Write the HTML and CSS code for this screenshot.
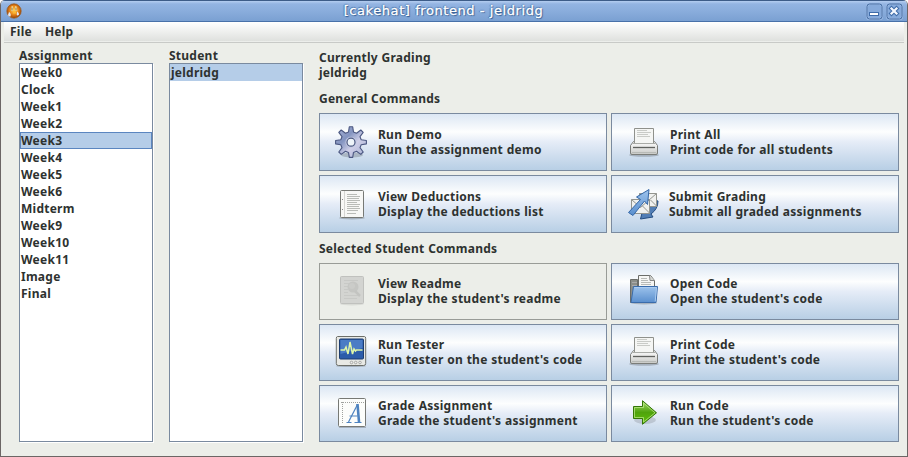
FILE: index.html
```html
<!DOCTYPE html>
<html lang="en">
<head>
<meta charset="utf-8">
<title>[cakehat] frontend - jeldridg</title>
<link rel="stylesheet" href="styles.css">
</head>
<body>
<svg width="0" height="0" class="defs" aria-hidden="true">
  <defs>
    <linearGradient id="metal" x2="0" y2="1"><stop offset="0" stop-color="#fff"/><stop offset="1" stop-color="#c8c9c6"/></linearGradient>
    <linearGradient id="gearfill" x2="1" y2="1"><stop offset="0" stop-color="#a9b3d6"/><stop offset=".35" stop-color="#8494c0"/><stop offset=".6" stop-color="#cfcfe8"/><stop offset="1" stop-color="#a3aed1"/></linearGradient>
    <linearGradient id="blue" x2="0" y2="1"><stop offset="0" stop-color="#9dc3ec"/><stop offset="1" stop-color="#5a8fce"/></linearGradient>
    <linearGradient id="green" x2="0" y2="1"><stop offset="0" stop-color="#a4d96c"/><stop offset=".5" stop-color="#4fa30c"/><stop offset="1" stop-color="#62c20a"/></linearGradient>
    <radialGradient id="orange" cx=".5" cy=".45"><stop offset="0" stop-color="#ffd35a"/><stop offset=".6" stop-color="#e8871a"/><stop offset="1" stop-color="#a84d08"/></radialGradient>
    <symbol id="printer" viewBox="0 0 32 32">
      <ellipse cx="16" cy="29" rx="15" ry="1.800" fill="#000" opacity=".2"/>
      <path d="M5.500 15.500h21l3 4v7.500q0 1.500-1.500 1.500h-24q-1.500 0-1.500-1.500v-7.500z" fill="url(#metal)" stroke="#7b7d79"/>
      <path d="M6.500 2.500h19v15h-19z" fill="#f5f6f4" stroke="#8f918c"/>
      <path d="M9 4.500h10M9 6.500h14M9 8.500h11M9 10.500h13" stroke="#c9cbc7"/>
      <path d="M5 17.500h22" stroke="#a9aba7"/>
      <path d="M5 21.500h22" stroke="#60625f" stroke-width="1.300"/>
      <path d="M4 26.500h24" stroke="#b8bab6"/>
    </symbol>
  </defs>
</svg>
<div class="window">
  <header class="titlebar">
    <svg class="app-icon" width="16" height="16" viewBox="0 0 16 16">
      <circle cx="8" cy="8" r="7.200" fill="url(#orange)" stroke="#9a5a1c" stroke-width=".7"/>
      <path d="M5.500 3.500q1-.8 1.500.2v4H5zM9 3.700q.8-1 1.700 0l.6 4H9z" fill="#fff0b0"/>
      <path d="M6 4.500v3M10 4.500v3" stroke="#8a642e"/>
      <path d="M3 9q2.500 1.500 1.500 4.500Q2.500 14 2 12zM11.200 8.500q2.500 2 1.500 3.500-1.500 1-2-.6z" fill="#e3eaf4"/>
      <path d="M7 9.500h3" stroke="#f9b936" stroke-width="2"/>
    </svg>
    <h1 class="title">[cakehat] frontend - jeldridg</h1>
    <div class="controls">
      <svg width="17" height="17" viewBox="0 0 17 17"><rect x="1" y="1" width="15" height="15" rx="2.500" fill="#86aadb" stroke="#a5c2ea" stroke-width="2"/><rect x="1" y="1" width="15" height="15" rx="2.500" fill="none" stroke="#3c659c"/><rect x="3.500" y="9.500" width="9" height="3" fill="#fff" stroke="#3f6ca9"/></svg>
      <svg width="17" height="17" viewBox="0 0 17 17"><rect x="1" y="1" width="15" height="15" rx="2.500" fill="#86aadb" stroke="#a5c2ea" stroke-width="2"/><rect x="1" y="1" width="15" height="15" rx="2.500" fill="none" stroke="#3c659c"/><path d="M5.500 5.500l5 5M10.500 5.500l-5 5" stroke="#3f6ca9" stroke-width="4.200" stroke-linecap="square"/><path d="M5.500 5.500l5 5M10.500 5.500l-5 5" stroke="#f4f8fe" stroke-width="2.200" stroke-linecap="square"/></svg>
    </div>
  </header>
  <nav class="menubar"><span>File</span><span>Help</span></nav>
  <main class="content">
    <section class="column">
      <h2>Assignment</h2>
      <ul class="list">
        <li>Week0</li><li>Clock</li><li>Week1</li><li>Week2</li><li class="selected focused">Week3</li><li>Week4</li><li>Week5</li><li>Week6</li><li>Midterm</li><li>Week9</li><li>Week10</li><li>Week11</li><li>Image</li><li>Final</li>
      </ul>
    </section>
    <section class="column">
      <h2>Student</h2>
      <ul class="list"><li class="selected">jeldridg</li></ul>
    </section>
    <section class="commands">
      <p class="current">Currently Grading<br>jeldridg</p>
      <h2 class="general-title">General Commands</h2>
      <div class="grid general">
        <button>
          <svg viewBox="0 0 32 32"><ellipse cx="17" cy="29" rx="11" ry="2.500" fill="#000" opacity=".18"/><path d="M14.300 .8h3.400l.8 5.200 3 1.200 4.300-3.200 2.400 2.400-3.200 4.300 1.200 3 5.200.8v3.400l-5.200.8-1.200 3 3.200 4.300-2.400 2.400-4.300-3.200-3 1.200-.8 5h-3.400l-.8-5-3-1.200-4.300 3.200-2.400-2.400 3.200-4.300-1.200-3-5.200-.8v-3.400l5.200-.8 1.200-3-3.200-4.300 2.400-2.400 4.300 3.200 3-1.200z" fill="url(#gearfill)" stroke="#4b5781" stroke-width="1.100" stroke-linejoin="round"/><circle cx="16" cy="16.200" r="5.500" fill="#c3cae2"/><circle cx="16" cy="16.200" r="4" fill="#eef4f9" stroke="#4b5781" stroke-width="1.200"/></svg>
          <span>Run Demo<br>Run the assignment demo</span>
        </button>
        <button>
          <svg><use href="#printer"/></svg>
          <span>Print All<br>Print code for all students</span>
        </button>
        <button>
          <svg viewBox="0 0 32 32"><ellipse cx="17" cy="30" rx="13" ry="1.500" fill="#000" opacity=".2"/><rect x="5.500" y="2.500" width="23" height="27" rx="1" fill="#f7f7f5" stroke="#777975"/><path d="M9.500 3v26" stroke="#d5d5d2"/><path d="M12 6.500h10M12 8.500h13M12 10.500h12M12 12.500h13M12 14.500h10M12 16.500h13M12 18.500h12M12 20.500h13M12 22.500h11M12 25.500h9" stroke="#b9bbb7"/><path d="M7 11.500h1M7 21.500h1" stroke="#888"/></svg>
          <span>View Deductions<br>Display the deductions list</span>
        </button>
        <button class="submit">
          <svg viewBox="0 0 32 32"><path d="M13.500 31l2.500-10 3 2q7-5 8-11l4 1q0 8-7 13l2 3z" fill="#527eb5" stroke="#244d81"/><g fill="#f0f1ef" stroke="#93958f"><path d="M12.500 5.500h17v13h-17z"/><path d="M12.500 5.500l9 7 8-7M29.500 18l-6-6" fill="none"/><path d="M4.500 11.500h18v14h-18z"/><path d="M4.500 25l7-7M22.500 25l-7-7M4.500 11.500l9 8 9-8" fill="none"/></g><path d="M1.500 24.500l12-13-4-2.500L22 1.500l-1.500 15-3-3.500L6 27.500z" fill="url(#blue)" stroke="#3467a7"/></svg>
          <span>Submit Grading<br>Submit all graded assignments</span>
        </button>
      </div>
      <h2 class="student-title">Selected Student Commands</h2>
      <div class="grid student">
        <button disabled>
          <svg viewBox="0 0 32 32"><ellipse cx="17" cy="30" rx="12" ry="1.500" fill="#000" opacity=".08"/><rect x="5.500" y="2.500" width="23" height="27" rx="1" fill="#d3d4d1" stroke="#c0c1be"/><path d="M9 6.500h14M9 9.500h5M9 12.500h4M9 15.500h4M9 18.500h4M9 21.500h15M9 24.500h13" stroke="#c8c9c6"/><circle cx="18" cy="13" r="5.500" fill="#c5c6c3"/><circle cx="17" cy="12" r="3" fill="#cbccc9"/><path d="M20 17l5 5" stroke="#c3c4c1" stroke-width="2.500"/></svg>
          <span>View Readme<br>Display the student's readme</span>
        </button>
        <button>
          <svg viewBox="0 0 32 32"><ellipse cx="16" cy="31" rx="15" ry="1" fill="#000" opacity=".2"/><path d="M2.500 1.500h27q1.200 0 1.200 2v25q0 2-2 2H3.300q-2 0-2-2v-25q0-2 1.200-2z" fill="#e8e9e5" stroke="#6c6e69"/><rect x="4.500" y="4" width="24" height="20" rx="1" fill="#2c5caa" stroke="#1d3d70"/><path d="M5.500 5h22v8l-22 6z" fill="#4b7cc5"/><path d="M5.500 15h4l1.500-3 2 7 2-12 2.500 12 1.500-5 1.500 2 1-1h6" fill="none" stroke="#e0f6a8" stroke-width="1.500"/><g fill="#eee" stroke="#9a9c98" stroke-width=".8"><circle cx="16.500" cy="27.500" r="1.300"/><circle cx="20.700" cy="27.500" r="1.300"/><circle cx="25" cy="27.500" r="1.300"/></g></svg>
          <span>Run Tester<br>Run tester on the student's code</span>
        </button>
        <button>
          <svg viewBox="0 0 32 32"><rect x="3.500" y="2.500" width="27" height="28" rx="1" fill="#fcfdfb" stroke="#777975"/><path d="M6 6.500h23M7.500 6v22" stroke="#a0a29e" stroke-dasharray="1 1"/><path d="M4 31.500h27" stroke="#0003"/><g stroke="#4e83c0" fill="none"><path d="M11.500 26.500h5M19.500 26.500h7M14.500 20h8" stroke-width="1.200"/><path d="M13.500 26L22.500 8.500" stroke-width="1.200"/><path d="M22.500 8L24 26" stroke-width="2.600"/></g></svg>
          <span>Grade Assignment<br>Grade the student's assignment</span>
        </button>
        <button>
          <svg viewBox="0 0 32 32"><ellipse cx="16" cy="29" rx="13" ry="1.500" fill="#000" opacity=".2"/><path d="M2.500 5.500h7v23h-7z" fill="#8b8e89" stroke="#6b6d69"/><path d="M4 8.500h5M4 11.500h5" stroke="#aaa"/><path d="M10.500 1.500h12l4 5v15h-16z" fill="#f6f6f4" stroke="#6b6d69"/><path d="M21.500 1.500l.5 5h4.500" fill="#d5d7d3" stroke="#888"/><path d="M13 4.500h6M13 6.500h7M13 8.500h10M13 10.500h10" stroke="#b9bbb7"/><path d="M5.500 12.500h24l-1.500 16h-25z" fill="url(#blue)" stroke="#3a6cab"/><path d="M6.500 13.500h22l-1.300 14" fill="none" stroke="#a9caef"/></svg>
          <span>Open Code<br>Open the student's code</span>
        </button>
        <button>
          <svg><use href="#printer"/></svg>
          <span>Print Code<br>Print the student's code</span>
        </button>
        <button>
          <svg viewBox="0 0 32 32"><ellipse cx="17" cy="24" rx="11" ry="4" fill="#000" opacity=".13"/><path d="M5.500 10.500h9V4.700l14 12.100-14 11.500v-5.800h-9z" fill="url(#green)" stroke="#347608"/><path d="M6.500 11.500h9V7L27 16.800 15.500 26v-4.500h-9z" fill="none" stroke="#c1ed8d" opacity=".7"/></svg>
          <span>Run Code<br>Run the student's code</span>
        </button>
      </div>
    </section>
  </main>
</div>
</body>
</html>
```
FILE: styles.css
```css
* { box-sizing: border-box; }
body {
  margin: 0;
  background: #fff;
  color: #2e3230;
  font: bold 12px/15px "Noto Sans", sans-serif;
  letter-spacing: .25px;
  word-spacing: .3px;
}
.defs { display: block; }
h1, h2, p, ul { margin: 0; padding: 0; font: inherit; }
.window {
  width: 908px;
  height: 457px;
  overflow: hidden;
  border: solid #6c6665;
  border-width: 0 1px 1px;
  border-radius: 5px 5px 0 0;
  background: #eceee9;
}
.titlebar {
  display: flex;
  align-items: center;
  height: 22px;
  margin: 0 -1px;
  padding: 0 5px 0 6px;
  border-top: 1px solid #3d5c88;
  border-bottom: 1px solid #4871a9;
  background: linear-gradient(#b4cdf0, #93b4e2 3px, #8aaddc 50%, #7aa0d2);
}
.title {
  flex: 1;
  padding-right: 1px;
  color: #fff;
  font: 13px/18px "DejaVu Sans", sans-serif;
  letter-spacing: .57px;
  word-spacing: 0;
  -webkit-text-stroke: .3px #fff;
  text-align: center;
  text-shadow: 1px 1px 1px #31598f, -1px 0 1px #456fa8, 0 -1px 1px #456fa8;
}
.controls { display: flex; gap: 3px; }
.menubar {
  display: flex;
  gap: 13px;
  height: 21px;
  margin: 0 3px;
  padding: 2px 6px;
  border-bottom: 1px solid #c8cac7;
  box-shadow: inset 0 -1px #eceeeb;
  background: linear-gradient(#fff, #dddfdc);
}
.content { display: flex; height: 413px; padding: 5px 8px 0 18px; }
.column { width: 134px; margin-right: 16px; }
.column h2 { height: 15px; }
.list {
  height: 379px;
  border: 1px solid #7a8a9f;
  background: #fff;
  box-shadow: 1px 1px #fff;
  list-style: none;
}
.list li { height: 17px; padding: 1px; }
.selected { background: #b5cde8; }
.focused { box-shadow: inset 0 0 0 1px #5b86c0; }
.commands { width: 580px; padding-top: 2px; }
.current { height: 41px; }
.general-title { height: 22px; }
.student-title { height: 22px; margin-top: 8px; }
.grid {
  display: grid;
  grid-template-columns: 288px 288px;
  gap: 4px;
}
.general { grid-auto-rows: 58px; }
.student {
  grid-auto-flow: column;
  grid-template-rows: repeat(3, 57px);
}
button {
  display: flex;
  align-items: center;
  gap: 11px;
  padding: 0 0 0 15px;
  border: 1px solid #7a8a9f;
  background: linear-gradient(#dce7f4, #fdfefe 32%, #e5ecf7 50%, #b8cfe5);
  color: inherit;
  font: inherit;
  letter-spacing: inherit;
  word-spacing: inherit;
  text-align: left;
}
.general button:nth-child(even),
.student button:nth-child(n+4) { gap: 10px; padding-left: 16px; }
.general button.submit { gap: 10px; padding-left: 15px; }
.student button { padding-bottom: 2px; }
button svg { flex: none; width: 32px; height: 32px; margin-top: -1px; }
button span { white-space: nowrap; }
button:disabled { border-color: #999c97; background: #eceee9; }
```
